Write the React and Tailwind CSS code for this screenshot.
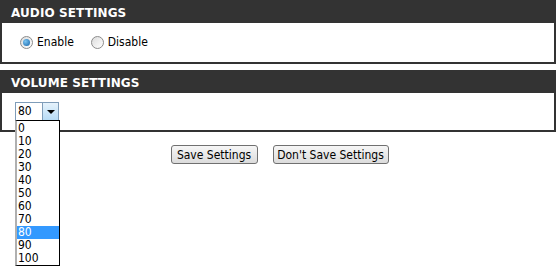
import { useState } from "react"

const volumes = [0, 10, 20, 30, 40, 50, 60, 70, 80, 90, 100]

const Section = ({ title, children }) => (
  <div className="mr-px">
    <div className="h-[23px] bg-[#333333] pl-[11px] pt-[4px] text-[12px] font-bold tracking-[0.1px] text-white [font-family:'DejaVu_Sans',Verdana,sans-serif]">
      {title}
    </div>
    <div className="border-x-2 border-b-2 border-[#333333]">{children}</div>
  </div>
)

const Radio = ({ checked, label, onClick }) => (
  <label className="flex cursor-pointer items-center gap-[4px]" onClick={onClick}>
    <span className="flex h-[13px] w-[13px] items-center justify-center rounded-full border border-[#8c8c8c] bg-gradient-to-br from-[#dcdcdc] to-[#ffffff]">
      {checked ? <span className="h-[7px] w-[7px] rounded-full bg-[radial-gradient(circle_at_35%_35%,#7ac4f2,#1463a8)]" /> : null}
    </span>
    <span>{label}</span>
  </label>
)

export default function App() {
  const [enabled, setEnabled] = useState(true)
  const [volume, setVolume] = useState(80)

  return (
    <div className="relative h-[266px] w-[557px] bg-white text-[12px] text-black [font-family:Tahoma,'DejaVu_Sans_Condensed','DejaVu_Sans',sans-serif]">
      <Section title="AUDIO SETTINGS">
        <div className="flex h-[39px] items-center gap-[17px] pl-[18px] pb-[1px]">
          <Radio checked={enabled} label="Enable" onClick={() => setEnabled(true)} />
          <Radio checked={!enabled} label="Disable" onClick={() => setEnabled(false)} />
        </div>
      </Section>
      <div className="h-[6px]" />
      <Section title="VOLUME SETTINGS">
        <div className="h-[37px] pl-[13px] pt-[9px]">
          <div className="relative w-[44px]">
            <div className="flex h-[19px] items-stretch border border-[#7f9db9] bg-white">
              <span className="flex-1 pl-[2px] leading-[17px]">{volume}</span>
              <span className="flex w-[16px] items-center justify-center border-l border-[#7f9db9] bg-gradient-to-b from-[#e6f3fc] to-[#b7dbf5]">
                <span className="h-0 w-0 border-x-[4px] border-t-[4px] border-x-transparent border-t-black" />
              </span>
            </div>
            <div className="absolute left-0 top-[18px] z-10 w-[45px] border border-l-2 border-black border-l-[#b0b0b0] bg-white pt-[1px]">
              {volumes.map((v) => (
                <div
                  key={v}
                  onClick={() => setVolume(v)}
                  className={`h-[13px] pl-[1px] leading-[13px] ${v === volume ? "bg-[#3399ff] text-white" : ""}`}
                >
                  {v}
                </div>
              ))}
            </div>
          </div>
        </div>
      </Section>
      <div className="flex justify-center gap-[15px] pt-[13px] pl-[2px]">
        <button className="h-[19px] w-[87px] rounded-[3px] border border-[#707070] bg-gradient-to-b from-[#f6f6f6] to-[#dcdcdc] text-[12px]">
          Save Settings
        </button>
        <button className="h-[19px] w-[116px] rounded-[3px] border border-[#707070] bg-gradient-to-b from-[#f6f6f6] to-[#dcdcdc] text-[12px]">
          Don't Save Settings
        </button>
      </div>
    </div>
  )
}
